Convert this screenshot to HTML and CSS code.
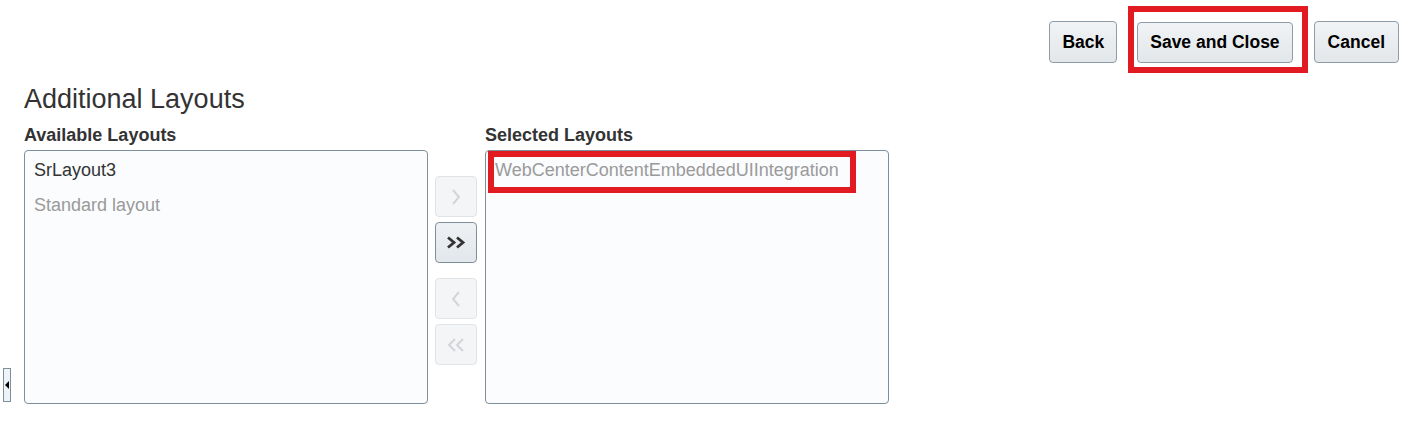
FILE: index.html
```html
<!DOCTYPE html>
<html lang="en">
<head>
<meta charset="utf-8">
<title>Additional Layouts</title>
<link rel="stylesheet" href="styles.css">
</head>
<body>
<div class="toolbar">
  <button class="btn">Back</button>
  <span class="highlight"><button class="btn">Save and Close</button></span>
  <button class="btn">Cancel</button>
</div>
<main class="content">
  <h1 class="title">Additional Layouts</h1>
  <div class="shuttle">
    <div class="pane">
      <div class="pane-label">Available Layouts</div>
      <div class="listbox">
        <div class="item">SrLayout3</div>
        <div class="item disabled">Standard layout</div>
      </div>
    </div>
    <div class="controls">
      <button class="sbtn off" aria-label="Move">
        <svg width="8" height="16" viewBox="0 0 8 16"><polyline points="1,1 7,8 1,15" /></svg>
      </button>
      <button class="sbtn" aria-label="Move all">
        <svg width="20" height="13" viewBox="0 0 20 13"><polyline points="2,1.5 8,6.5 2,11.5" /><polyline points="11,1.5 17,6.5 11,11.5" /></svg>
      </button>
      <button class="sbtn off gap" aria-label="Remove">
        <svg width="8" height="16" viewBox="0 0 8 16"><polyline points="7,1 1,8 7,15" /></svg>
      </button>
      <button class="sbtn off" aria-label="Remove all">
        <svg width="20" height="14" viewBox="0 0 20 14"><polyline points="9,1 3,7 9,13" /><polyline points="17,1 11,7 17,13" /></svg>
      </button>
    </div>
    <div class="pane">
      <div class="pane-label">Selected Layouts</div>
      <div class="listbox">
        <div class="item disabled">WebCenterContentEmbeddedUIIntegration</div>
        <span class="annot"></span>
      </div>
    </div>
  </div>
</main>
<div class="splitter"><span class="tri"></span></div>
</body>
</html>
```

FILE: styles.css
```css
html, body {
  margin: 0;
  padding: 0;
  background: #ffffff;
  font-family: "Liberation Sans", Arial, sans-serif;
  color: #333333;
}

.toolbar {
  display: flex;
  justify-content: flex-end;
  align-items: flex-start;
  padding: 21px 17px 0 0;
  height: 42px;
}

.btn {
  box-sizing: border-box;
  height: 42px;
  padding: 0 12px;
  margin-left: 21px;
  border: 1px solid #8d9ca8;
  border-radius: 4px;
  background: linear-gradient(#f1f3f5, #e3e7ea);
  font-family: "Liberation Sans", Arial, sans-serif;
  font-size: 17.5px;
  font-weight: bold;
  color: #000000;
}

.highlight {
  position: relative;
  display: flex;
  margin-left: 20px;
}
.highlight .btn {
  margin-left: 0;
  margin-top: 1px;
  height: 41px;
}
.highlight::after {
  content: "";
  position: absolute;
  top: -15px;
  left: -9px;
  right: -15px;
  bottom: -10px;
  border: 6px solid #e21b23;
}
.highlight + .btn {
  margin-left: 21px;
  padding: 0 13px;
}

.content {
  padding-left: 24px;
}

.title {
  margin: 20px 0 9px;
  font-size: 27px;
  line-height: 32px;
  font-weight: normal;
  color: #333333;
}

.shuttle {
  display: flex;
  align-items: flex-start;
}

.pane {
  display: flex;
  flex-direction: column;
  width: 404px;
}

.pane-label {
  font-size: 18px;
  font-weight: bold;
  line-height: 22px;
  margin-bottom: 4px;
  color: #333333;
}

.listbox {
  position: relative;
  box-sizing: border-box;
  height: 254px;
  padding: 2px 0;
  border: 1px solid #7d8f9b;
  border-radius: 4px;
  background: #fafcfe;
}

.item {
  padding-left: 9px;
  font-size: 18px;
  line-height: 35px;
  color: #333333;
  white-space: nowrap;
}
.item.disabled {
  color: #9a9a9a;
}

.annot {
  position: absolute;
  top: 0;
  left: 2px;
  width: 368px;
  height: 42px;
  box-sizing: border-box;
  border: 6px solid #e21b23;
}

.controls {
  display: flex;
  flex-direction: column;
  gap: 5px;
  width: 42px;
  margin: 52px 8px 0 7px;
}

.sbtn {
  box-sizing: border-box;
  width: 42px;
  height: 41px;
  padding: 0;
  display: flex;
  align-items: center;
  justify-content: center;
  border: 1px solid #7d8f9b;
  border-radius: 4px;
  background: linear-gradient(#eef1f4, #e2e7eb);
}
.sbtn svg polyline {
  fill: none;
  stroke: #333333;
  stroke-width: 2.8;
}
.sbtn.off {
  border-color: #e1e4e7;
  background: #f4f5f7;
}
.sbtn.off svg polyline {
  stroke: #d2d5d8;
  stroke-width: 2;
}
.sbtn.gap {
  margin-top: 10px;
}

.splitter {
  position: absolute;
  left: 3px;
  top: 368px;
  width: 8px;
  height: 34px;
  box-sizing: border-box;
  border: 1px solid #7d8f9b;
  background: #eef3f8;
  display: flex;
  align-items: center;
  justify-content: center;
}
.tri {
  width: 0;
  height: 0;
  border-top: 4px solid transparent;
  border-bottom: 4px solid transparent;
  border-right: 4px solid #000000;
}
```
